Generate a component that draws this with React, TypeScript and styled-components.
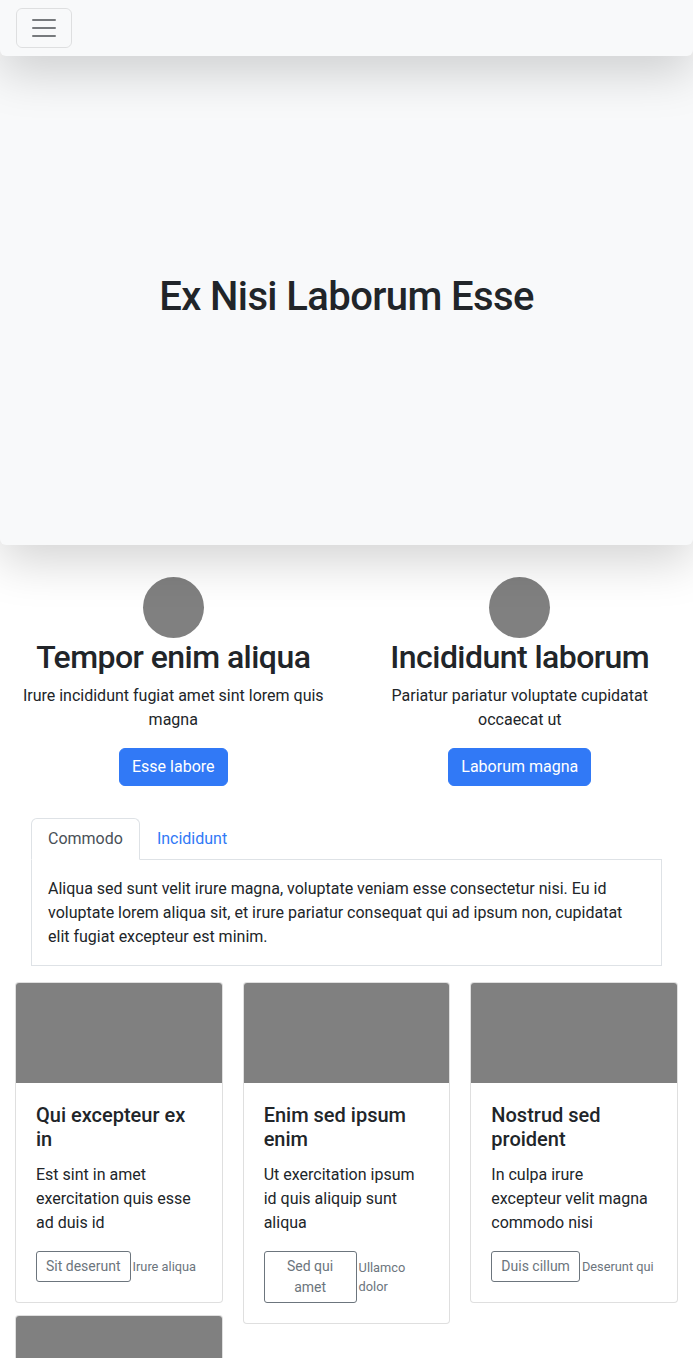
import React from "react";
import styled, { createGlobalStyle } from "styled-components";

const GlobalStyle = createGlobalStyle`
  * { box-sizing: border-box; }
  body {
    margin: 0;
    font-family: Roboto, "Noto Sans", "Liberation Sans", sans-serif;
    font-size: 16px;
    line-height: 1.5;
    color: #212529;
    background: #fff;
  }
  h1, h2, h5, p { margin: 0; }
`;

const Navbar = styled.nav`
  position: relative;
  z-index: 2;
  height: 56px;
  padding: 8px 16px;
  display: flex;
  align-items: center;
  background: #f8f9fa;
  border-radius: 0 0 6px 6px;
  box-shadow: 0 16px 48px rgba(0, 0, 0, 0.175);
`;

const Toggler = styled.button`
  width: 56px;
  height: 40px;
  padding: 0;
  display: flex;
  align-items: center;
  justify-content: center;
  background: transparent;
  border: 1px solid rgba(0, 0, 0, 0.1);
  border-radius: 6px;
`;

const Hero = styled.header`
  position: relative;
  z-index: 1;
  height: 489px;
  display: flex;
  align-items: center;
  justify-content: center;
  background: #f8f9fa;
  border-radius: 6px;
  box-shadow: 0 16px 48px rgba(0, 0, 0, 0.175);
`;

const HeroTitle = styled.h1`
  font-size: 40px;
  font-weight: 500;
  line-height: 1.2;
  letter-spacing: -0.6px;
  margin-bottom: 8px;
`;

const Features = styled.section`
  display: grid;
  grid-template-columns: 1fr 1fr;
  margin-top: 32px;
`;

const Feature = styled.div`
  padding: 0 12px;
  display: flex;
  flex-direction: column;
  align-items: center;
  text-align: center;
`;

const Avatar = styled.div`
  width: 61px;
  height: 61px;
  border-radius: 50%;
  background: #808080;
`;

const FeatureTitle = styled.h2`
  font-size: 32px;
  font-weight: 500;
  line-height: 1.2;
  letter-spacing: -0.55px;
  margin-bottom: 8px;
`;

const FeatureText = styled.p`
  margin-bottom: 16px;
`;

const PrimaryButton = styled.button`
  font: inherit;
  color: #fff;
  background: #3179f6;
  border: 1px solid #3179f6;
  border-radius: 6px;
  padding: 6px 12px;
  line-height: 24px;
`;

const TabsWrap = styled.section`
  margin: 32px 31px 16px;
`;

const TabList = styled.div`
  display: flex;
  border-bottom: 1px solid #dee2e6;
`;

const Tab = styled.button<{ $active?: boolean }>`
  font: inherit;
  line-height: 24px;
  padding: 8px 16px;
  margin-bottom: -1px;
  background: ${(p) => (p.$active ? "#fff" : "transparent")};
  color: ${(p) => (p.$active ? "#495057" : "#3179f6")};
  border: 1px solid transparent;
  border-color: ${(p) => (p.$active ? "#dee2e6 #dee2e6 #fff" : "transparent")};
  border-radius: 6px 6px 0 0;
`;

const TabPanel = styled.div`
  padding: 17px 16px 16px;
  border: 1px solid #dee2e6;
  border-top: none;
`;

const CardColumns = styled.section`
  display: grid;
  grid-template-columns: repeat(3, 1fr);
  column-gap: 20px;
  align-items: start;
  padding: 0 15px;
`;

const Column = styled.div`
  display: flex;
  flex-direction: column;
  gap: 12px;
`;

const Card = styled.article`
  background: #fff;
  border: 1px solid rgba(0, 0, 0, 0.125);
  border-radius: 4px;
  overflow: hidden;
`;

const CardImage = styled.div`
  height: 100px;
  background: #808080;
`;

const CardBody = styled.div`
  padding: 20px;
`;

const CardTitle = styled.h5`
  font-size: 20px;
  font-weight: 500;
  line-height: 1.2;
  margin-bottom: 12px;
`;

const CardText = styled.p`
  margin-bottom: 16px;
`;

const CardActions = styled.div`
  display: flex;
  align-items: center;
  gap: 2px;
`;

const OutlineButton = styled.button`
  font-family: inherit;
  font-size: 14px;
  line-height: 21px;
  padding: 4px 9px;
  color: #6c757d;
  background: transparent;
  border: 1px solid #6c757d;
  border-radius: 3px;
`;

const Muted = styled.small`
  font-size: 12.8px;
  line-height: 1.5;
  color: #6c757d;
`;

function Hamburger() {
  return (
    <svg width="30" height="30" viewBox="0 0 30 30">
      <path
        d="M4 7h22M4 15h22M4 23h22"
        stroke="rgba(33,37,41,0.6)"
        strokeWidth="2"
        strokeLinecap="round"
      />
    </svg>
  );
}

type CardData = { title: string; text: string; action: string; note: string };

const cards: CardData[][] = [
  [
    { title: "Qui excepteur ex in", text: "Est sint in amet exercitation quis esse ad duis id", action: "Sit deserunt", note: "Irure aliqua" },
    { title: "Labore nisi dolor", text: "Amet dolor ullamco ipsum sint", action: "Lorem ipsum", note: "Elit sunt" },
  ],
  [
    { title: "Enim sed ipsum enim", text: "Ut exercitation ipsum id quis aliquip sunt aliqua", action: "Sed qui amet", note: "Ullamco dolor" },
  ],
  [
    { title: "Nostrud sed proident", text: "In culpa irure excepteur velit magna commodo nisi", action: "Duis cillum", note: "Deserunt qui" },
  ],
];

export default function App() {
  return (
    <>
      <GlobalStyle />
      <Navbar>
        <Toggler aria-label="Toggle navigation">
          <Hamburger />
        </Toggler>
      </Navbar>
      <Hero>
        <HeroTitle>Ex Nisi Laborum Esse</HeroTitle>
      </Hero>
      <Features>
        <Feature>
          <Avatar />
          <FeatureTitle>Tempor enim aliqua</FeatureTitle>
          <FeatureText>Irure incididunt fugiat amet sint lorem quis magna</FeatureText>
          <PrimaryButton>Esse labore</PrimaryButton>
        </Feature>
        <Feature>
          <Avatar />
          <FeatureTitle>Incididunt laborum</FeatureTitle>
          <FeatureText>Pariatur pariatur voluptate cupidatat occaecat ut</FeatureText>
          <PrimaryButton>Laborum magna</PrimaryButton>
        </Feature>
      </Features>
      <TabsWrap>
        <TabList>
          <Tab $active>Commodo</Tab>
          <Tab>Incididunt</Tab>
        </TabList>
        <TabPanel>
          Aliqua sed sunt velit irure magna, voluptate veniam esse consectetur nisi. Eu id
          voluptate lorem aliqua sit, et irure pariatur consequat qui ad ipsum non, cupidatat
          elit fugiat excepteur est minim.
        </TabPanel>
      </TabsWrap>
      <CardColumns>
        {cards.map((col, i) => (
          <Column key={i}>
            {col.map((c) => (
              <Card key={c.title}>
                <CardImage />
                <CardBody>
                  <CardTitle>{c.title}</CardTitle>
                  <CardText>{c.text}</CardText>
                  <CardActions>
                    <OutlineButton>{c.action}</OutlineButton>
                    <Muted>{c.note}</Muted>
                  </CardActions>
                </CardBody>
              </Card>
            ))}
          </Column>
        ))}
      </CardColumns>
    </>
  );
}
